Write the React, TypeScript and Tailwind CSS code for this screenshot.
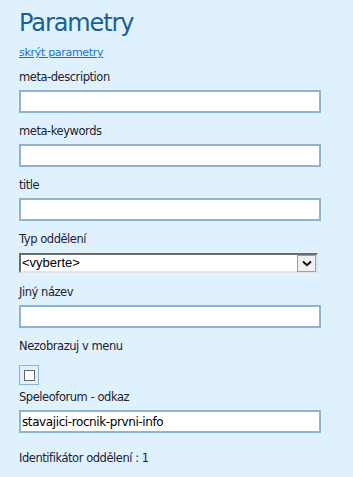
const labelCls =
  "block text-[11.5px] leading-[16px] tracking-[-0.45px] text-[#1e2133]";
const inputCls =
  "block h-[23px] w-[302px] border-2 border-[#8fb4cb] bg-white px-[1px] text-[12px] tracking-[-0.4px] text-black outline-none";

function Field({ label, value = "", top = "mt-[10px]" }: { label: string; value?: string; top?: string }) {
  return (
    <div className={top}>
      <label className={labelCls}>{label}</label>
      <input type="text" defaultValue={value} className={`mt-[5px] ${inputCls}`} />
    </div>
  );
}

export default function App() {
  return (
    <div
      className="min-h-[477px] w-[353px] bg-[#dff1fd] px-[19px] pt-[8px]"
      style={{ fontFamily: '"DejaVu Sans", Verdana, sans-serif' }}
    >
      <h1 className="text-[24px] leading-[30px] tracking-[-1.1px] text-[#1b5e94]">Parametry</h1>
      <a href="#" className="mt-[8px] block text-[11px] leading-[14px] tracking-[-0.3px] text-[#1a6fd0] underline">
        skrýt parametry
      </a>
      <Field label="meta-description" top="mt-[9px]" />
      <Field label="meta-keywords" />
      <Field label="title" />
      <div className="mt-[10px]">
        <label className={labelCls}>Typ oddělení</label>
        <div className="mt-[6px] flex h-[20px] w-[299px] items-center border-2 border-t-[#6b6b6b] border-l-[#6b6b6b] border-r-[#e3e3e3] border-b-[#e3e3e3] bg-white">
          <span
            className="flex-1 pl-[1px] text-[13px] leading-[16px] text-black"
            style={{ fontFamily: '"Liberation Sans", Arial, sans-serif' }}
          >
            &lt;vyberte&gt;
          </span>
          <span className="flex h-[17px] w-[19px] items-center justify-center border border-[#a0a0a0] bg-[#f0f0f0]">
            <svg width="10" height="7" viewBox="0 0 10 7">
              <path d="M1 1.5 L5 5.2 L9 1.5" fill="none" stroke="#111" strokeWidth="2" />
            </svg>
          </span>
        </div>
      </div>
      <Field label="Jiný název" top="mt-[11px]" />
      <div className="mt-[10px]">
        <label className={labelCls}>Nezobrazuj v menu</label>
        <div className="mt-[11px] flex h-[20px] w-[20px] items-center justify-center border border-[#8fb4cb]">
          <span className="block h-[11px] w-[11px] border border-[#666] bg-white" />
        </div>
      </div>
      <Field label="Speleoforum - odkaz" value="stavajici-rocnik-prvni-info" top="mt-[4px]" />
      <p className={`mt-[17px] ${labelCls}`}>Identifikátor oddělení : 1</p>
    </div>
  );
}
